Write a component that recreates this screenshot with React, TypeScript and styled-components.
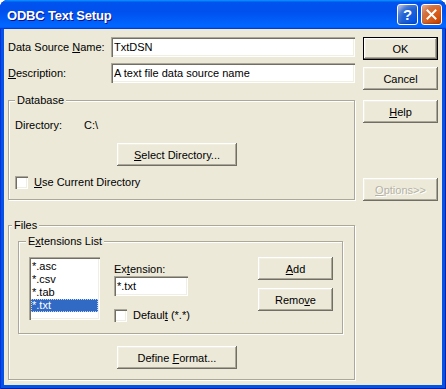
import React from 'react';
import styled, { createGlobalStyle } from 'styled-components';

const GlobalStyle = createGlobalStyle`
	html, body {
		margin: 0;
		padding: 0;
		background: #fff;
	}
	body {
		font-family: "Liberation Sans", Arial, sans-serif;
		font-size: 11px;
	}
`;

const Window = styled.div`
	width: 446px;
	height: 389px;
	display: flex;
	flex-direction: column;
	background: #0553e6;
	border-radius: 8px 8px 0 0;
	overflow: hidden;
	box-shadow: inset 1px 0 0 #0831d9, inset -1px 0 0 #001ea0, inset 0 -1px 0 #001ea0;
`;

const TitleBar = styled.div`
	flex: none;
	height: 29px;
	display: flex;
	align-items: center;
	gap: 3px;
	padding: 0 4px 0 7px;
	background: linear-gradient(
		180deg,
		#0997ff 0%,
		#0053ee 8%,
		#0050ee 40%,
		#0066ff 88%,
		#0066ff 93%,
		#005bff 95%,
		#003dd7 96%,
		#003dd7 100%
	);
`;

const Title = styled.div`
	flex: 1;
	color: #fff;
	font-weight: bold;
	font-size: 13px;
	letter-spacing: -0.2px;
	text-shadow: 1px 1px 0 #0f1089;
	padding-top: 2px;
`;

const CaptionButton = styled.div<{ $close?: boolean }>`
	width: 21px;
	height: 21px;
	box-sizing: border-box;
	border: 1px solid #fff;
	border-radius: 3px;
	display: flex;
	align-items: center;
	justify-content: center;
	color: #fff;
	font-weight: bold;
	font-size: 15px;
	background: ${(p) =>
		p.$close
			? 'radial-gradient(circle at 90% 90%, #cc4600 0%, #dc6527 55%, #cd7546 70%, #e8a080 90%)'
			: 'radial-gradient(circle at 90% 90%, #0054e9 0%, #2263d5 55%, #4478d5 70%, #a5b4e4 90%)'};
	box-shadow: inset 0 -1px 2px rgba(0, 0, 0, 0.25);
`;

const Client = styled.div`
	flex: 1;
	margin: 0 4px 4px 4px;
	padding: 8px 4px 0 4px;
	background: #ece9d8;
	display: flex;
	color: #000;
`;

const LeftColumn = styled.div`
	width: 347px;
	display: flex;
	flex-direction: column;
`;

const RightColumn = styled.div`
	width: 75px;
	margin-left: 8px;
	display: flex;
	flex-direction: column;
`;

const FieldRow = styled.div<{ $gap?: number }>`
	display: flex;
	align-items: center;
	height: 20px;
	margin-top: ${(p) => p.$gap ?? 0}px;
`;

const Label = styled.span<{ $width?: number }>`
	width: ${(p) => (p.$width ? `${p.$width}px` : 'auto')};
	flex: none;
	line-height: 13px;
	white-space: nowrap;
`;

const TextInput = styled.input<{ $width?: number }>`
	box-sizing: border-box;
	width: ${(p) => (p.$width ? `${p.$width}px` : 'auto')};
	flex: ${(p) => (p.$width ? 'none' : '1')};
	min-width: 0;
	height: 20px;
	margin: 0;
	padding: 0 3px;
	border: none;
	outline: none;
	background: #fff;
	font: 11px 'Liberation Sans', Arial, sans-serif;
	color: #000;
	box-shadow: inset 1px 1px 0 #aca899, inset 2px 2px 0 #716f64, inset -1px -1px 0 #fff,
		inset -2px -2px 0 #f1efe2;
`;

// etched group box: grey line with a white line beside it
const Group = styled.fieldset<{
	$gap: number;
	$padLeft: number;
	$padRight: number;
	$padBottom: number;
	$stretch?: boolean;
}>`
	margin: ${(p) => p.$gap}px 0 0 0;
	padding: 0 ${(p) => p.$padRight}px ${(p) => p.$padBottom}px ${(p) => p.$padLeft}px;
	min-width: 0;
	align-self: ${(p) => (p.$stretch ? 'stretch' : 'auto')};
	border: 1px solid #aca899;
	box-shadow: inset 1px 1px 0 #fff, 1px 1px 0 #fff;
	display: flex;
	flex-direction: column;
	align-items: flex-start;
`;

const Legend = styled.legend<{ $shift?: number }>`
	padding: 0 2px;
	margin-left: ${(p) => p.$shift ?? 0}px;
	line-height: 13px;
	background: #ece9d8;
`;

const DirectoryRow = styled.div`
	display: flex;
	margin-top: 12px;
	line-height: 13px;
`;

const Button = styled.button<{ $default?: boolean; $width?: number; $gap?: number; $left?: number }>`
	flex: none;
	box-sizing: border-box;
	width: ${(p) => p.$width ?? 75}px;
	height: 23px;
	margin: ${(p) => p.$gap ?? 0}px 0 0 ${(p) => p.$left ?? 0}px;
	padding: 0;
	font: 11px 'Liberation Sans', Arial, sans-serif;
	color: #000;
	background: #ece9d8;
	border: ${(p) => (p.$default ? '1px solid #000' : 'none')};
	box-shadow: inset -1px -1px 0 #716f64, inset 1px 1px 0 #fff, inset -2px -2px 0 #aca899,
		inset 2px 2px 0 #f1efe2;

	&:disabled {
		color: #b5b2a5;
		text-shadow: 1px 1px 0 #fff;
	}
`;

const CheckRow = styled.label<{ $gap: number }>`
	display: flex;
	align-items: center;
	gap: 6px;
	height: 13px;
	margin-top: ${(p) => p.$gap}px;
	line-height: 13px;
`;

const CheckBox = styled.span`
	flex: none;
	width: 13px;
	height: 13px;
	box-sizing: border-box;
	background: #fff;
	box-shadow: inset 1px 1px 0 #aca899, inset 2px 2px 0 #716f64, inset -1px -1px 0 #fff,
		inset -2px -2px 0 #f1efe2;
`;

const ExtensionsRow = styled.div`
	display: flex;
	align-self: stretch;
	margin-top: 9px;
`;

const ListBox = styled.div`
	flex: none;
	width: 71px;
	height: 63px;
	box-sizing: border-box;
	padding: 3px 2px 2px 2px;
	background: #fff;
	box-shadow: inset 1px 1px 0 #aca899, inset 2px 2px 0 #716f64, inset -1px -1px 0 #fff,
		inset -2px -2px 0 #f1efe2;
`;

const ListItem = styled.div<{ $selected?: boolean }>`
	height: 13px;
	line-height: 13px;
	padding-left: 1px;
	box-sizing: border-box;
	color: ${(p) => (p.$selected ? '#fff' : '#000')};
	background: ${(p) => (p.$selected ? '#316ac5' : 'transparent')};
	outline: ${(p) => (p.$selected ? '1px dotted #c4d4ef' : 'none')};
	outline-offset: -1px;
`;

const ExtensionColumn = styled.div`
	display: flex;
	flex-direction: column;
	margin: 6px 0 0 14px;
`;

const ButtonStack = styled.div`
	display: flex;
	flex-direction: column;
	margin-left: auto;
`;

const Mn = styled.u`
	text-decoration: underline;
	text-underline-offset: 1px;
`;

const CloseIcon = () => (
	<svg width="11" height="11" viewBox="0 0 11 11">
		<path d="M1.5 1.5 L9.5 9.5 M9.5 1.5 L1.5 9.5" stroke="#fff" strokeWidth="2" strokeLinecap="square" />
	</svg>
);

const extensions = ['*.asc', '*.csv', '*.tab', '*.txt'];

export default function App(): JSX.Element {
	return (
		<>
			<GlobalStyle />
			<Window>
				<TitleBar>
					<Title>ODBC Text Setup</Title>
					<CaptionButton>?</CaptionButton>
					<CaptionButton $close>
						<CloseIcon />
					</CaptionButton>
				</TitleBar>
				<Client>
					<LeftColumn>
						<FieldRow>
							<Label $width={103}>
								Data Source <Mn>N</Mn>ame:
							</Label>
							<TextInput defaultValue="TxtDSN" />
						</FieldRow>
						<FieldRow $gap={6}>
							<Label $width={103}>
								<Mn>D</Mn>escription:
							</Label>
							<TextInput defaultValue="A text file data source name" />
						</FieldRow>

						<Group $gap={11} $padLeft={6} $padRight={6} $padBottom={10}>
							<Legend>Database</Legend>
							<DirectoryRow>
								<Label $width={69}>Directory:</Label>
								<Label>C:\</Label>
							</DirectoryRow>
							<Button $width={120} $gap={11} $left={102}>
								<Mn>S</Mn>elect Directory...
							</Button>
							<CheckRow $gap={10}>
								<CheckBox />
								<span>
									<Mn>U</Mn>se Current Directory
								</span>
							</CheckRow>
						</Group>

						<Group $gap={19} $padLeft={9} $padRight={11} $padBottom={10}>
							<Legend $shift={-6}>Files</Legend>
							<Group $gap={3} $padLeft={10} $padRight={9} $padBottom={11} $stretch>
								<Legend $shift={-3}>
									E<Mn>x</Mn>tensions List
								</Legend>
								<ExtensionsRow>
									<ListBox>
										{extensions.map((ext, i) => (
											<ListItem key={ext} $selected={i === extensions.length - 1}>
												{ext}
											</ListItem>
										))}
									</ListBox>
									<ExtensionColumn>
										<Label>
											Ex<Mn>t</Mn>ension:
										</Label>
										<TextInput $width={74} defaultValue="*.txt" />
										<CheckRow $gap={13}>
											<CheckBox />
											<span>
												Defaul<Mn>t</Mn> (*.*)
											</span>
										</CheckRow>
									</ExtensionColumn>
									<ButtonStack>
										<Button>
											<Mn>A</Mn>dd
										</Button>
										<Button $gap={8}>
											Remo<Mn>v</Mn>e
										</Button>
									</ButtonStack>
								</ExtensionsRow>
							</Group>
							<Button $width={120} $gap={12} $left={99}>
								Define <Mn>F</Mn>ormat...
							</Button>
						</Group>
					</LeftColumn>

					<RightColumn>
						<Button $default>OK</Button>
						<Button $gap={7}>Cancel</Button>
						<Button $gap={10}>
							<Mn>H</Mn>elp
						</Button>
						<Button $gap={55} disabled>
							<Mn>O</Mn>ptions&gt;&gt;
						</Button>
					</RightColumn>
				</Client>
			</Window>
		</>
	);
}
